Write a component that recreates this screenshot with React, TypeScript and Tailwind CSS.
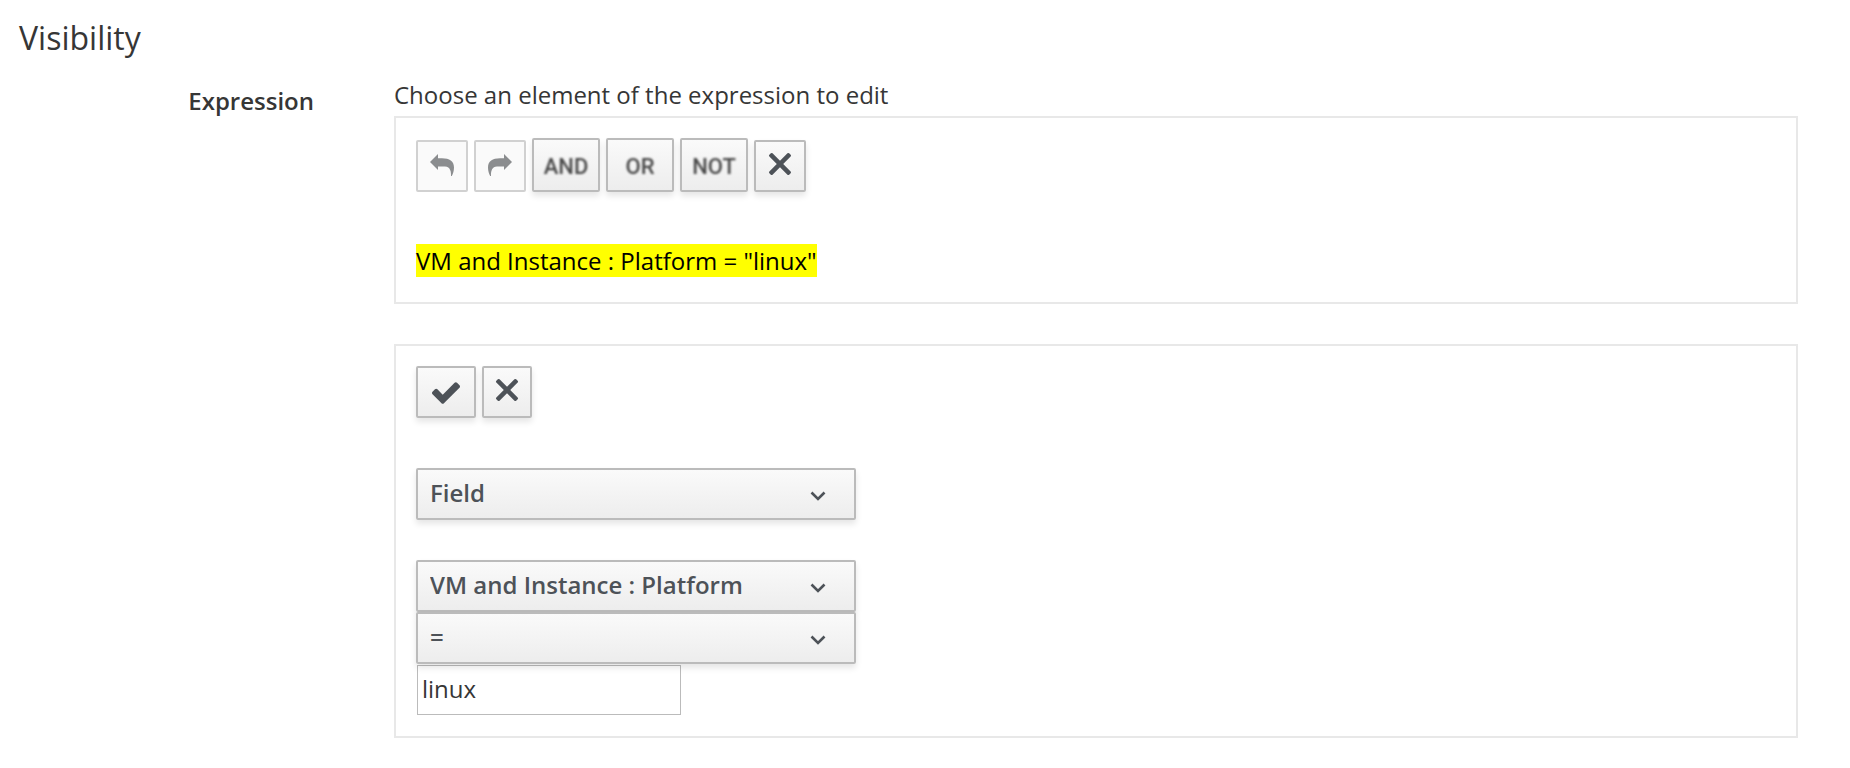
import React, { useState } from 'react';

const raised =
  'rounded-[2px] border-2 border-[#bbbbbb] bg-linear-to-b from-[#fafafa] to-[#ededed] text-[#4d5258] shadow-[0_4px_6px_rgba(3,3,3,0.1)]';
const flat = 'rounded-[2px] border-2 border-[#d1d1d1] bg-[#fafafa] text-[#8b8d8f]';
const center = 'flex shrink-0 items-center justify-center';

function UndoIcon({ flip = false }: { flip?: boolean }) {
  return (
    <svg viewBox="0 0 24 22" className={flip ? 'mb-0.5 h-[22px] w-6 -scale-x-100' : 'mb-0.5 h-[22px] w-6'} fill="currentColor" aria-hidden="true">
      <path d="M0 8 L8 0 V4.2 H12 C19.5 4.2 24 7 24 13.5 C24 17 23 20 21.8 22 H21 C21.2 18 20.5 12.6 15 12.4 H8 V16 Z" />
    </svg>
  );
}

function CloseIcon() {
  return (
    <svg viewBox="0 0 24 24" className="mb-1 size-6" fill="currentColor" aria-hidden="true">
      <rect x="-2" y="9.75" width="28" height="4.5" rx="1.2" transform="rotate(45 12 12)" />
      <rect x="-2" y="9.75" width="28" height="4.5" rx="1.2" transform="rotate(-45 12 12)" />
    </svg>
  );
}

function CheckIcon() {
  return (
    <svg viewBox="121 334 1550 1188" className="mt-0.5 h-[22px] w-7" fill="currentColor" aria-hidden="true">
      <path d="M1671 566q0 40-28 68l-724 724-136 136q-28 28-68 28t-68-28l-136-136-362-362q-28-28-28-68t28-68l136-136q28-28 68-28t68 28l294 295 656-657q28-28 68-28t68 28l136 136q28 28 28 68z" />
    </svg>
  );
}

function Operator({ children }: { children: string }) {
  return (
    <button type="button" className={`${center} h-[54px] w-[68px] pt-1 ${raised}`}>
      <span className="font-['Roboto',sans-serif] text-[22px] font-medium text-[#484848] blur-[1px]">{children}</span>
    </button>
  );
}

function Picker({ label, options }: { label: string; options: string[] }) {
  return (
    <div className="grid w-[440px] items-center">
      <select
        aria-label={label}
        className={`col-start-1 row-start-1 h-[52px] w-full appearance-none pr-16 pb-0.5 pl-3 font-semibold ${raised}`}
      >
        {options.map((option) => (
          <option key={option}>{option}</option>
        ))}
      </select>
      <svg
        viewBox="0 0 16 10"
        className="pointer-events-none col-start-1 row-start-1 mt-1 mr-[30px] h-2.5 w-4 justify-self-end text-[#4d5258]"
        fill="none"
        stroke="currentColor"
        strokeWidth="2.6"
        aria-hidden="true"
      >
        <path d="M1.5 1.5 L8 8 L14.5 1.5" />
      </svg>
    </div>
  );
}

export default function App() {
  const [value, setValue] = useState('linux');
  return (
    <main className="min-h-screen bg-white px-[19px] pt-[14px] pb-7 font-['Open_Sans',sans-serif] text-2xl leading-8 text-[#363636]">
      <h1 className="text-[32px] leading-[47px]">Visibility</h1>
      <div className="flex pr-[33px]">
        <h2 className="w-[295px] shrink-0 pt-6 text-right font-semibold">Expression</h2>
        <div className="ml-20 min-w-0 grow pt-[18px]">
          <p className="pb-[5px]">Choose an element of the expression to edit</p>
          <section className="border-2 border-[#e8e8e8] p-5 pb-6" aria-label="Expression editor">
            <div className="flex items-end gap-1.5">
              <button type="button" disabled aria-label="Undo" className={`${center} size-[52px] ${flat}`}>
                <UndoIcon />
              </button>
              <button type="button" disabled aria-label="Redo" className={`${center} size-[52px] ${flat}`}>
                <UndoIcon flip />
              </button>
              <Operator>AND</Operator>
              <Operator>OR</Operator>
              <Operator>NOT</Operator>
              <button type="button" aria-label="Remove" className={`${center} size-[52px] ${raised}`}>
                <CloseIcon />
              </button>
            </div>
            <p className="mt-[52px] leading-[34px]">
              <mark className="bg-[#ffff00] text-black">VM and Instance : Platform = "linux"</mark>
            </p>
          </section>
          <section className="mt-10 border-2 border-[#e8e8e8] p-5" aria-label="Element editor">
            <div className="flex gap-1.5">
              <button type="button" aria-label="Commit" className={`${center} h-[52px] w-[60px] ${raised}`}>
                <CheckIcon />
              </button>
              <button type="button" aria-label="Discard" className={`${center} h-[52px] w-[50px] ${raised}`}>
                <CloseIcon />
              </button>
            </div>
            <div className="mt-[50px]">
              <Picker label="Expression type" options={['Field', 'Count', 'Tag', 'Find']} />
            </div>
            <div className="mt-10">
              <Picker label="Field" options={['VM and Instance : Platform', 'VM and Instance : Name']} />
              <Picker label="Comparison" options={['=', '!=']} />
              <input
                type="text"
                aria-label="Value"
                value={value}
                onChange={(e) => setValue(e.target.value)}
                className="m-px block h-[50px] w-[264px] border border-[#bbbbbb] bg-transparent px-1 pb-1"
              />
            </div>
          </section>
        </div>
      </div>
    </main>
  );
}
